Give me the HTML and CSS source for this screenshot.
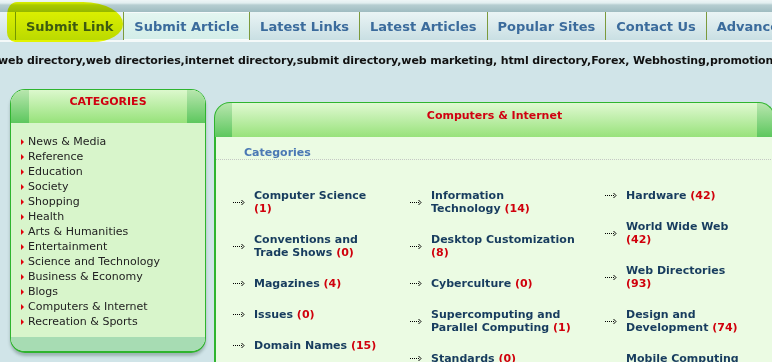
FILE: index.html
```html
<!DOCTYPE html>
<html lang="en">
<head>
    <meta charset="UTF-8">
    <meta name="viewport" content="width=device-width, initial-scale=1.0">
    <title>Web Directory - Computers &amp; Internet</title>
    <link rel="stylesheet" href="styles.css">
</head>
<body>
    <div class="topbar">
        <ul class="tabs">
            <li class="tab tab-marked"><span class="marker"></span><a href="#">Submit Link</a></li>
            <li class="tab tab-active"><a href="#">Submit Article</a></li>
            <li class="tab"><a href="#">Latest Links</a></li>
            <li class="tab"><a href="#">Latest Articles</a></li>
            <li class="tab"><a href="#">Popular Sites</a></li>
            <li class="tab"><a href="#">Contact Us</a></li>
            <li class="tab"><a href="#">Advanced Search</a></li>
        </ul>
    </div>

    <p class="keywords">web directory,web directories,internet directory,submit directory,web marketing, html directory,Forex, Webhosting,promotion,seo directory</p>

    <div class="layout">
        <aside class="side-box">
            <div class="side-head">CATEGORIES</div>
            <ul class="side-list">
                <li><a href="#">News &amp; Media</a></li>
                <li><a href="#">Reference</a></li>
                <li><a href="#">Education</a></li>
                <li><a href="#">Society</a></li>
                <li><a href="#">Shopping</a></li>
                <li><a href="#">Health</a></li>
                <li><a href="#">Arts &amp; Humanities</a></li>
                <li><a href="#">Entertainment</a></li>
                <li><a href="#">Science and Technology</a></li>
                <li><a href="#">Business &amp; Economy</a></li>
                <li><a href="#">Blogs</a></li>
                <li><a href="#">Computers &amp; Internet</a></li>
                <li><a href="#">Recreation &amp; Sports</a></li>
            </ul>
            <div class="side-foot"></div>
        </aside>

        <div class="main-box">
            <div class="main-head">Computers &amp; Internet</div>
            <div class="main-body">
                <h3 class="sub-title">Categories</h3>
                <div class="cat-grid">
                    <ul class="cat-col">
                        <li><span class="arrow"></span><a href="#">Computer Science <em>(1)</em></a></li>
                        <li><span class="arrow"></span><a href="#">Conventions and Trade Shows <em>(0)</em></a></li>
                        <li><span class="arrow"></span><a href="#">Magazines <em>(4)</em></a></li>
                        <li><span class="arrow"></span><a href="#">Issues <em>(0)</em></a></li>
                        <li><span class="arrow"></span><a href="#">Domain Names <em>(15)</em></a></li>
                    </ul>
                    <ul class="cat-col">
                        <li><span class="arrow"></span><a href="#">Information Technology <em>(14)</em></a></li>
                        <li><span class="arrow"></span><a href="#">Desktop Customization <em>(8)</em></a></li>
                        <li><span class="arrow"></span><a href="#">Cyberculture <em>(0)</em></a></li>
                        <li><span class="arrow"></span><a href="#">Supercomputing and Parallel Computing <em>(1)</em></a></li>
                        <li><span class="arrow"></span><a href="#">Standards <em>(0)</em></a></li>
                    </ul>
                    <ul class="cat-col">
                        <li><span class="arrow"></span><a href="#">Hardware <em>(42)</em></a></li>
                        <li><span class="arrow"></span><a href="#">World Wide Web <em>(42)</em></a></li>
                        <li><span class="arrow"></span><a href="#">Web Directories <em>(93)</em></a></li>
                        <li><span class="arrow"></span><a href="#">Design and Development <em>(74)</em></a></li>
                        <li><span class="arrow"></span><a href="#">Mobile Computing <em>(9)</em></a></li>
                    </ul>
                </div>
            </div>
        </div>
    </div>

    <script>
        // dotted arrow in front of every sub category
        var arrowSvg = '<svg width="12" height="7" viewBox="0 0 12 7">' +
            '<path d="M0 3.5h1M2 3.5h1M4 3.5h1M6 3.5h1M8 3.5h1" stroke="#000" stroke-width="1"/>' +
            '<path d="M8.5 1L11 3.5L8.5 6" fill="none" stroke="#000" stroke-width="1"/></svg>';
        document.querySelectorAll('.arrow').forEach(function (el) {
            el.innerHTML = arrowSvg;
        });
    </script>
</body>
</html>
```

FILE: styles.css
```css
body {
    font-family: "DejaVu Sans", Verdana, sans-serif;
    margin: 0;
    background-color: #d0e4e8;
    overflow: hidden;
    width: 772px;
}

a {
    text-decoration: none;
    color: inherit;
}

ul {
    list-style: none;
    margin: 0;
    padding: 0;
}

/* top navigation */
.topbar {
    padding-top: 12px;
    background: linear-gradient(#eef5f6 0, #e2eef0 3px, #b6cdd1 5px, #9fbcc1 12px);
    border-bottom: 2px solid #f4f9f9;
}

.tabs {
    display: flex;
    height: 28px;
    padding-left: 15px;
    background: linear-gradient(#eaf4f5, #c9dfe3);
    white-space: nowrap;
}

.tab {
    position: relative;
    display: flex;
    align-items: center;
    padding: 0 10px;
    border-left: 1px solid #7b9a3c;
    font-size: 13px;
    font-weight: bold;
    color: #3b6b9c;
}

.tab a {
    position: relative;
}

.tab-active {
    background: linear-gradient(#e4f6f1, #d2ede8);
    box-shadow: inset 0 1px 0 #f6fbfb, inset 0 -1px 0 #f6fbfb;
}

.marker {
    position: absolute;
    left: -9px;
    top: -10px;
    width: 116px;
    height: 40px;
    background: #eefa00;
    border-radius: 10px 40px 30px 8px / 12px 22px 18px 10px;
    mix-blend-mode: multiply;
    z-index: 1;
}

.tab-marked a {
    color: #3d5a10;
    z-index: 2;
}

.keywords {
    margin: 12px 0 0 -2px;
    font-size: 11px;
    line-height: 14px;
    letter-spacing: -0.1px;
    font-weight: bold;
    color: #111;
    white-space: nowrap;
}

/* columns */
.layout {
    display: flex;
    align-items: flex-start;
    gap: 8px;
    padding-left: 10px;
    margin-top: 21px;
}

.side-box {
    flex: 0 0 196px;
    box-sizing: border-box;
    border: 1px solid #2fb42f;
    border-bottom-width: 2px;
    border-radius: 15px;
    overflow: hidden;
    background-color: #d8f5cb;
    box-shadow: 0 3px 3px rgba(40, 70, 60, 0.3);
}

.side-head,
.main-head {
    color: #d00010;
    font-size: 11px;
    font-weight: bold;
    text-align: center;
}

.side-head {
    height: 33px;
    line-height: 24px;
    background:
        linear-gradient(#b8e6ae, #5dc75e) left top / 18px 100% no-repeat,
        linear-gradient(#b8e6ae, #5dc75e) right top / 18px 100% no-repeat,
        linear-gradient(#dcf8cd, #97e27a);
}

.side-list {
    padding: 11px 0 8px 10px;
    font-size: 11px;
    line-height: 15px;
    color: #222;
}

.side-list li {
    display: flex;
    align-items: center;
}

.side-list li::before {
    content: "";
    width: 0;
    height: 0;
    margin-right: 4px;
    border-left: 3px solid #e0000c;
    border-top: 3px solid transparent;
    border-bottom: 3px solid transparent;
}

.side-foot {
    height: 14px;
    background-color: #a7dcb3;
}

.main-box {
    flex: 0 0 561px;
    margin-top: 13px;
}

.main-head {
    height: 34px;
    line-height: 26px;
    border: 1px solid #2fb42f;
    border-bottom: 0;
    border-radius: 16px 16px 0 0;
    background:
        linear-gradient(#b8e6ae, #5dc75e) left top / 17px 100% no-repeat,
        linear-gradient(#b8e6ae, #5dc75e) right top / 17px 100% no-repeat,
        linear-gradient(#e0f9d2, #98e27b);
}

.main-body {
    border-left: 2px solid #2fb42f;
    background-color: #ebfbe3;
    height: 240px;
}

.sub-title {
    margin: 0;
    padding: 9px 0 0 28px;
    font-size: 11px;
    line-height: 13px;
    color: #4a78b4;
    border-bottom: 1px dotted #c4c8c4;
}

.cat-grid {
    display: grid;
    grid-template-columns: 177px 195px 1fr;
    padding: 20px 0 0 17px;
}

.cat-col li {
    display: flex;
    align-items: center;
    padding: 9px 0;
    font-size: 11px;
    line-height: 13px;
    font-weight: bold;
    color: #173c5e;
}

.cat-col:nth-child(1) a {
    max-width: 129px;
}

.cat-col:nth-child(2) a {
    max-width: 145px;
}

.cat-col:nth-child(3) a {
    max-width: 118px;
}

.cat-col em {
    font-style: normal;
    color: #d0000c;
}

.arrow {
    flex: 0 0 12px;
    height: 7px;
    margin-right: 9px;
}

.arrow svg {
    display: block;
}
```
